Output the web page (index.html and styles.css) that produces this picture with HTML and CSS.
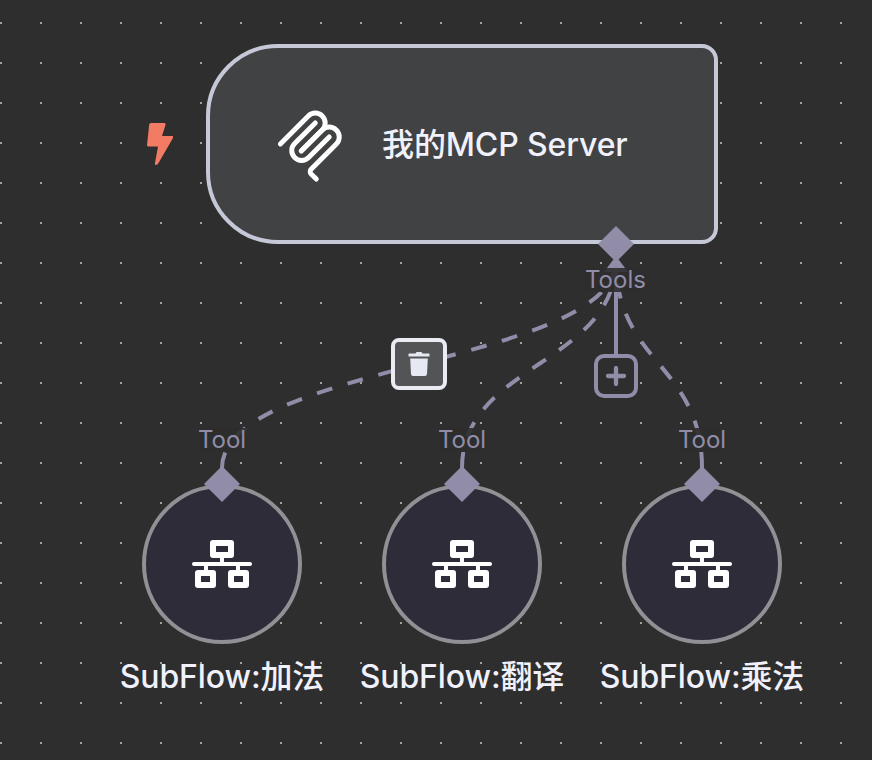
FILE: index.html
```html
<!DOCTYPE html>
<html lang="zh-CN">
<head>
<meta charset="utf-8">
<title>Workflow</title>
<link rel="stylesheet" href="styles.css">
</head>
<body>
<main class="canvas">
  <svg class="defs" width="0" height="0">
    <symbol id="flow" viewBox="0 0 60 48">
      <path class="flow-line" d="M30 18v6M14 24v6M46 24v6"/>
      <path class="flow-bar" d="M2 24h56"/>
      <path fill-rule="evenodd" d="M21 0h18a3 3 0 0 1 3 3v12a3 3 0 0 1-3 3H21a3 3 0 0 1-3-3V3a3 3 0 0 1 3-3zM24 6v6h12V6zM6 30h15a3 3 0 0 1 3 3v12a3 3 0 0 1-3 3H6a3 3 0 0 1-3-3V33a3 3 0 0 1 3-3zM9 36v6h9v-6zM39 30h15a3 3 0 0 1 3 3v12a3 3 0 0 1-3 3H39a3 3 0 0 1-3-3V33a3 3 0 0 1 3-3zM42 36v6h9v-6z"/>
    </symbol>
  </svg>

  <svg class="edges" viewBox="0 0 872 760">
    <path class="edge" d="M222 468C222 364 616 364 616 260"/>
    <path class="edge" d="M462 468C462 364 616 364 616 260"/>
    <path class="edge" d="M702 468C702 364 616 364 616 260"/>
    <path class="stem" d="M616 262V356"/>
    <path class="arrow" d="M616 256l12 16h-24z"/>
  </svg>

  <svg class="bolt" viewBox="0 0 26 42"><path d="M4 0H17Q19 0 18.500 2L15 13H25Q27 13 26 15L11.500 40Q10.500 42 9 42Q7.500 42 8 40L11 23.500H1.500Q0 23.500 0 22L2.200 1.500Q2.400 0 4 0Z"/></svg>

  <section class="server">
    <svg class="mcp" viewBox="0 0 180 180">
      <path d="M18 84.853 85.882 16.971c9.373-9.373 24.569-9.373 33.941 0 9.373 9.372 9.373 24.568 0 33.941L68.558 102.177"/>
      <path d="M69.265 101.47 119.823 50.912c9.373-9.373 24.569-9.373 33.942 0l.353.353c9.373 9.373 9.373 24.569 0 33.941L92.725 146.6c-3.124 3.124-3.124 8.189 0 11.313l12.606 12.607"/>
      <path d="M102.853 33.941 52.648 84.146c-9.372 9.372-9.372 24.568 0 33.941 9.373 9.372 24.569 9.372 33.941 0l50.205-50.205"/>
    </svg>
    <h1 class="title">我的MCP Server</h1>
  </section>
  <svg class="port port-tools" viewBox="0 0 36 36"><path d="M18 0 36 18 18 36 0 18z"/></svg>
  <span class="label label-tools">Tools</span>

  <button class="add" aria-label="Add"><svg viewBox="0 0 20 20"><path d="M10 2v16M2 10h16"/></svg></button>
  <button class="delete" aria-label="Delete"><svg viewBox="0 0 22 24"><path d="M1 1.500h6.500L8.500 0h5l1 1.500H21q.5 0 .5.500v2.500H.5V2q0-.5.500-.5zM2.200 6.500h17.600L19 22q-.2 2-2 2H5q-1.800 0-2-2z"/></svg></button>

  <section class="tools">
    <article class="tool">
      <span class="label">Tool</span>
      <div class="disc"><svg class="port" viewBox="0 0 36 36"><path d="M18 0 36 18 18 36 0 18z"/></svg><svg class="flow"><use href="#flow"/></svg></div>
      <h2 class="title">SubFlow:加法</h2>
    </article>
    <article class="tool">
      <span class="label">Tool</span>
      <div class="disc"><svg class="port" viewBox="0 0 36 36"><path d="M18 0 36 18 18 36 0 18z"/></svg><svg class="flow"><use href="#flow"/></svg></div>
      <h2 class="title">SubFlow:翻译</h2>
    </article>
    <article class="tool">
      <span class="label">Tool</span>
      <div class="disc"><svg class="port" viewBox="0 0 36 36"><path d="M18 0 36 18 18 36 0 18z"/></svg><svg class="flow"><use href="#flow"/></svg></div>
      <h2 class="title">SubFlow:乘法</h2>
    </article>
  </section>
</main>
</body>
</html>
```
FILE: styles.css
```css
* { box-sizing: border-box; }
body { margin: 0; }
.canvas {
  position: relative;
  width: 872px;
  height: 760px;
  overflow: hidden;
  background:
    conic-gradient(from 0deg at 2px 2px, transparent 75%, #a0a0a0 0) 0 22px / 40px 40px,
    #2e2e2e;
  font-family: Inter, "Noto Sans CJK SC", sans-serif;
  color: #f1f1fb;
}
.defs { position: absolute; }
.edges { position: absolute; inset: 0; width: 872px; height: 760px; }
.edge, .stem { fill: none; stroke: #918da8; stroke-width: 4; }
.edge { stroke-dasharray: 16 16; }
.arrow, .port { fill: #918da8; }
.bolt { position: absolute; left: 147px; top: 123px; width: 26px; height: 42px; fill: #f27b64; }
.server {
  position: absolute;
  left: 206px;
  top: 44px;
  width: 512px;
  height: 200px;
  display: flex;
  align-items: center;
  padding-left: 63px;
  border: 4px solid #c5c8d7;
  border-radius: 72px 16px 16px 72px;
  background: #414244;
}
.mcp {
  width: 74px;
  height: 74px;
  margin-top: 4px;
  fill: none;
  stroke: #fff;
  stroke-width: 12;
  stroke-linecap: round;
}
.title { margin: 0; font-size: 32px; line-height: 40px; font-weight: 500; letter-spacing: -.12px; white-space: nowrap; }
.server .title { margin-left: 35px; margin-top: 1px; }
.port { width: 36px; height: 36px; }
.port-tools { position: absolute; left: 598px; top: 226px; }
.label {
  height: 24px;
  font-size: 24px;
  line-height: 24px;
  color: #918da8;
  background: rgba(46, 46, 46, .9);
}
.label-tools { position: absolute; left: 585px; top: 268px; }
.add {
  position: absolute;
  left: 594px;
  top: 354px;
  width: 44px;
  height: 44px;
  display: grid;
  place-items: center;
  padding: 0;
  border: 4px solid #918da8;
  border-radius: 10px;
  background: #2e2e2e;
}
.add svg { width: 20px; height: 20px; fill: none; stroke: #918da8; stroke-width: 4.3; stroke-linecap: round; }
.delete {
  position: absolute;
  left: 391px;
  top: 338px;
  width: 56px;
  height: 52px;
  display: grid;
  place-items: center;
  padding: 0;
  border: 4px solid #eaebf3;
  border-radius: 8px;
  background: #525456;
}
.delete svg { width: 22px; height: 24px; fill: #e6e9f4; }
.tools { position: absolute; left: 102px; top: 428px; display: flex; }
.tool { width: 240px; display: flex; flex-direction: column; align-items: center; }
.disc {
  position: relative;
  width: 160px;
  height: 160px;
  margin: 32px 0 13px;
  display: grid;
  place-items: center;
  border: 4px solid #909095;
  border-radius: 50%;
  background: #2e2c39;
}
.disc .port { position: absolute; left: 58px; top: -22px; }
.flow { width: 60px; height: 48px; fill: #fff; }
.flow-line, .flow-bar { fill: none; stroke: #fff; stroke-width: 4; }
.flow-bar { stroke-linecap: round; }
```
